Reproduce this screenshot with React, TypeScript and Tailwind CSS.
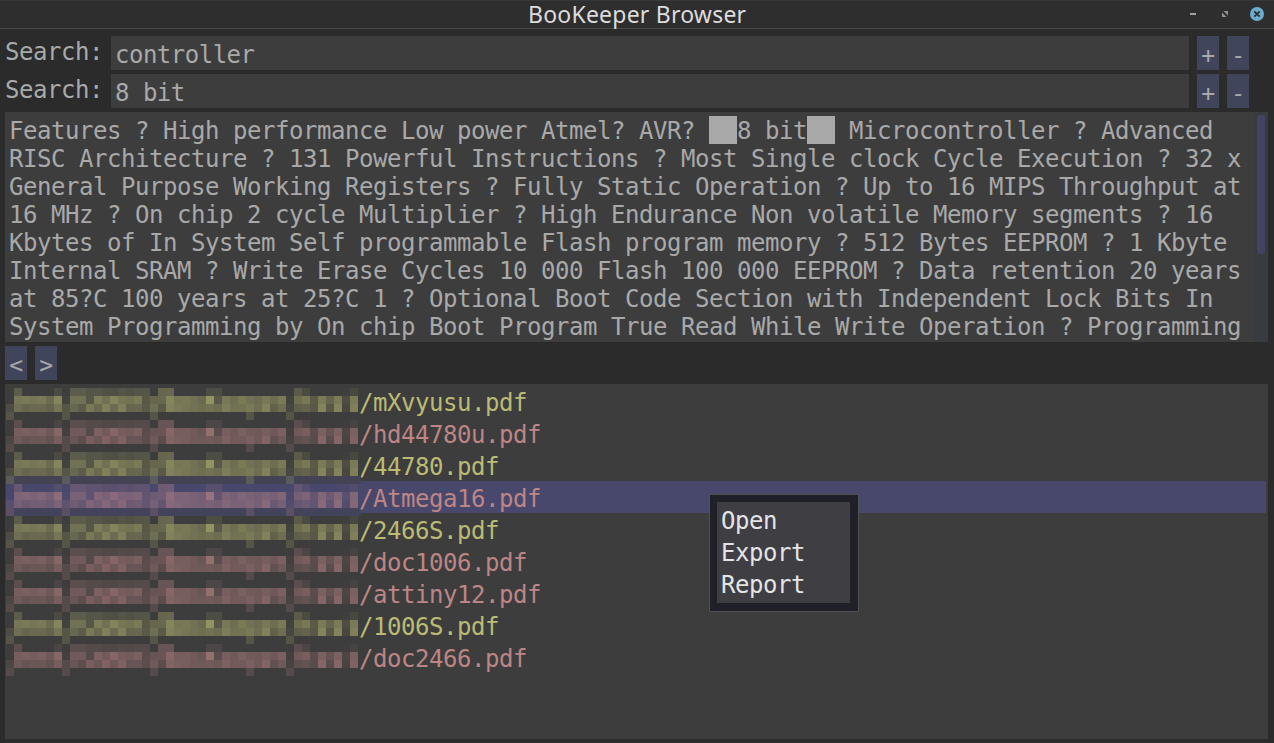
import React from "react";

const excerptLines = [
  "RISC Architecture ? 131 Powerful Instructions ? Most Single clock Cycle Execution ? 32 x",
  "General Purpose Working Registers ? Fully Static Operation ? Up to 16 MIPS Throughput at",
  "16 MHz ? On chip 2 cycle Multiplier ? High Endurance Non volatile Memory segments ? 16",
  "Kbytes of In System Self programmable Flash program memory ? 512 Bytes EEPROM ? 1 Kbyte",
  "Internal SRAM ? Write Erase Cycles 10 000 Flash 100 000 EEPROM ? Data retention 20 years",
  "at 85?C 100 years at 25?C 1 ? Optional Boot Code Section with Independent Lock Bits In",
  "System Programming by On chip Boot Program True Read While Write Operation ? Programming",
];

type Tone = "olive" | "rose";

const files: { name: string; tone: Tone; selected?: boolean }[] = [
  { name: "/mXvyusu.pdf", tone: "olive" },
  { name: "/hd44780u.pdf", tone: "rose" },
  { name: "/44780.pdf", tone: "olive" },
  { name: "/Atmega16.pdf", tone: "rose", selected: true },
  { name: "/2466S.pdf", tone: "olive" },
  { name: "/doc1006.pdf", tone: "rose" },
  { name: "/attiny12.pdf", tone: "rose" },
  { name: "/1006S.pdf", tone: "olive" },
  { name: "/doc2466.pdf", tone: "rose" },
];

// Opacity (percent) of each 8px block of the obscured directory path.
const mosaic: number[][] = [
  [0, 28, 0, 0, 0, 0, 12, 0, 28, 28, 22, 22, 18, 16, 20, 18, 22, 22, 0, 36, 38, 0, 0, 0, 0, 15, 15, 0, 0, 0, 0, 0, 0, 0, 0, 0, 27, 12, 0, 0, 0, 0, 2, 10],
  [0, 50, 54, 50, 54, 42, 64, 5, 46, 46, 22, 56, 46, 62, 50, 48, 54, 24, 36, 38, 64, 50, 52, 46, 40, 76, 25, 52, 44, 54, 46, 42, 52, 44, 54, 5, 44, 52, 26, 54, 36, 54, 15, 54],
  [14, 44, 36, 40, 40, 34, 50, 22, 38, 28, 52, 40, 58, 42, 58, 36, 38, 26, 44, 26, 60, 54, 50, 46, 44, 48, 42, 56, 46, 48, 54, 44, 60, 32, 44, 10, 30, 34, 24, 62, 24, 62, 10, 58],
];
const descenders = [0, 7, 18, 30, 35];

function ObscuredPath({ tone, selected }: { tone: Tone; selected?: boolean }) {
  const fill = tone === "olive" ? "#bcbb74" : "#be8585";
  return (
    <svg className="mt-[3px] block h-8 w-[355px] shrink-0 overflow-visible" shapeRendering="crispEdges">
      {selected && (
        <>
          <rect x={0} y={-8} width={355} height={8} fill="#434354" />
          <rect x={0} y={0} width={355} height={24} fill="#48486c" />
          <rect x={0} y={24} width={355} height={8} fill="#43435c" />
          {descenders.map((c) => (
            <rect key={c} x={c * 8} y={-8} width={8} height={8} fill="#5b5b5b" />
          ))}
        </>
      )}
      {mosaic.map((row, r) =>
        row.map((v, c) =>
          v > 0 ? (
            <rect key={`${r}-${c}`} x={c * 8} y={r * 8} width={8} height={8} fill={fill} opacity={(v * 0.9) / 100} />
          ) : null,
        ),
      )}
      {descenders.map((c) => (
        <rect key={c} x={c * 8} y={24} width={8} height={8} fill={fill} opacity={0.2} />
      ))}
    </svg>
  );
}

function SmallButton({ label }: { label: string }) {
  return (
    <button className="flex h-[34px] w-[22px] items-center justify-center bg-[#41455c] pt-1 text-[23px] leading-none">
      {label}
    </button>
  );
}

function SearchRow({ value }: { value: string }) {
  return (
    <div className="flex h-[34px]">
      <label className="w-[106px] leading-[33px]">Search:</label>
      <div className="w-[1078px] bg-[#3d3d3d] pl-1 leading-[39px] tracking-[-0.5px]">{value}</div>
      <div className="ml-2 flex gap-2">
        <SmallButton label="+" />
        <SmallButton label="-" />
      </div>
    </div>
  );
}

export default function App() {
  return (
    <div className="relative flex h-[743px] w-[1274px] flex-col overflow-hidden whitespace-pre bg-[#2b2b2b] font-['DejaVu_Sans_Mono',monospace] text-[24px] tracking-[-0.45px] text-[#a9a9a9]">
      <header className="flex h-[29px] shrink-0 items-center border-t border-b border-t-[#383838] border-b-[#484a48] bg-[#2e2e2e]">
        <h1 className="flex-1 pl-[528px] font-['Noto_Sans',sans-serif] text-[23px] leading-[25px] tracking-[0.22px] text-[#dcdcdc]">BooKeeper Browser</h1>
        <svg className="h-[27px] w-[100px] shrink-0" viewBox="1174 1 100 27">
          <rect x="1190" y="13" width="6" height="2" fill="#a0a0a0" />
          <path d="M1223.5 11h4.5v4.5zM1222 12.5v4.5h4.5z" fill="#929292" />
          <circle cx="1257" cy="14" r="7" fill="#6bacd0" />
          <path d="M1254.3 11.3l5.4 5.4m0-5.4l-5.4 5.4" stroke="#2e2e2e" strokeWidth="1.8" />
        </svg>
      </header>

      <main className="flex flex-col gap-1 pt-[7px] pl-[5px]">
        <SearchRow value="controller" />
        <SearchRow value="8 bit" />

        <section className="flex h-[230px] w-[1263px] bg-[#3d3d3d]">
          <div className="w-[1249px] pt-[5px] pl-1 leading-7">
            <p className="h-7">
              {"Features ? High performance Low power Atmel? AVR? "}
              <span className="-mt-px inline-block h-7 w-7 bg-[#a9a9a9] align-top" />
              8 bit
              <span className="-mt-px inline-block h-7 w-7 bg-[#a9a9a9] align-top" />
              {" Microcontroller ? Advanced"}
            </p>
            {excerptLines.map((line) => (
              <p key={line} className="h-7">{line}</p>
            ))}
          </div>
          <div className="flex w-[14px] justify-center bg-[#383c40] pt-[3px]">
            <div className="h-[139px] w-2 rounded-[3px] bg-[#444462]" />
          </div>
        </section>

        <nav className="flex gap-2">
          <SmallButton label="<" />
          <SmallButton label=">" />
        </nav>

        <ul className="h-[355px] w-[1263px] bg-[#3d3d3d] pt-px pr-0.5 pl-px">
          {files.map((f) => (
            <li key={f.name} className={f.selected ? "flex h-8 bg-[#48486c]" : "flex h-8"}>
              <ObscuredPath tone={f.tone} selected={f.selected} />
              <span className={f.tone === "olive" ? "-ml-0.5 leading-[37px] text-[#bcbb74]" : "-ml-0.5 leading-[37px] text-[#be8585]"}>{f.name}</span>
            </li>
          ))}
        </ul>
      </main>

      <div className="absolute top-[494px] left-[709px] h-[118px] w-[150px] border border-[#505050] bg-[#202028] px-[7px] pt-[7px] text-[#e4e4e4]">
        <div className="h-[101px] w-[133px] bg-[#3f3e43] pt-[3px] pl-1">
          {["Open", "Export", "Report"].map((item) => (
            <div key={item} className="h-8 leading-8">{item}</div>
          ))}
        </div>
      </div>
    </div>
  );
}
